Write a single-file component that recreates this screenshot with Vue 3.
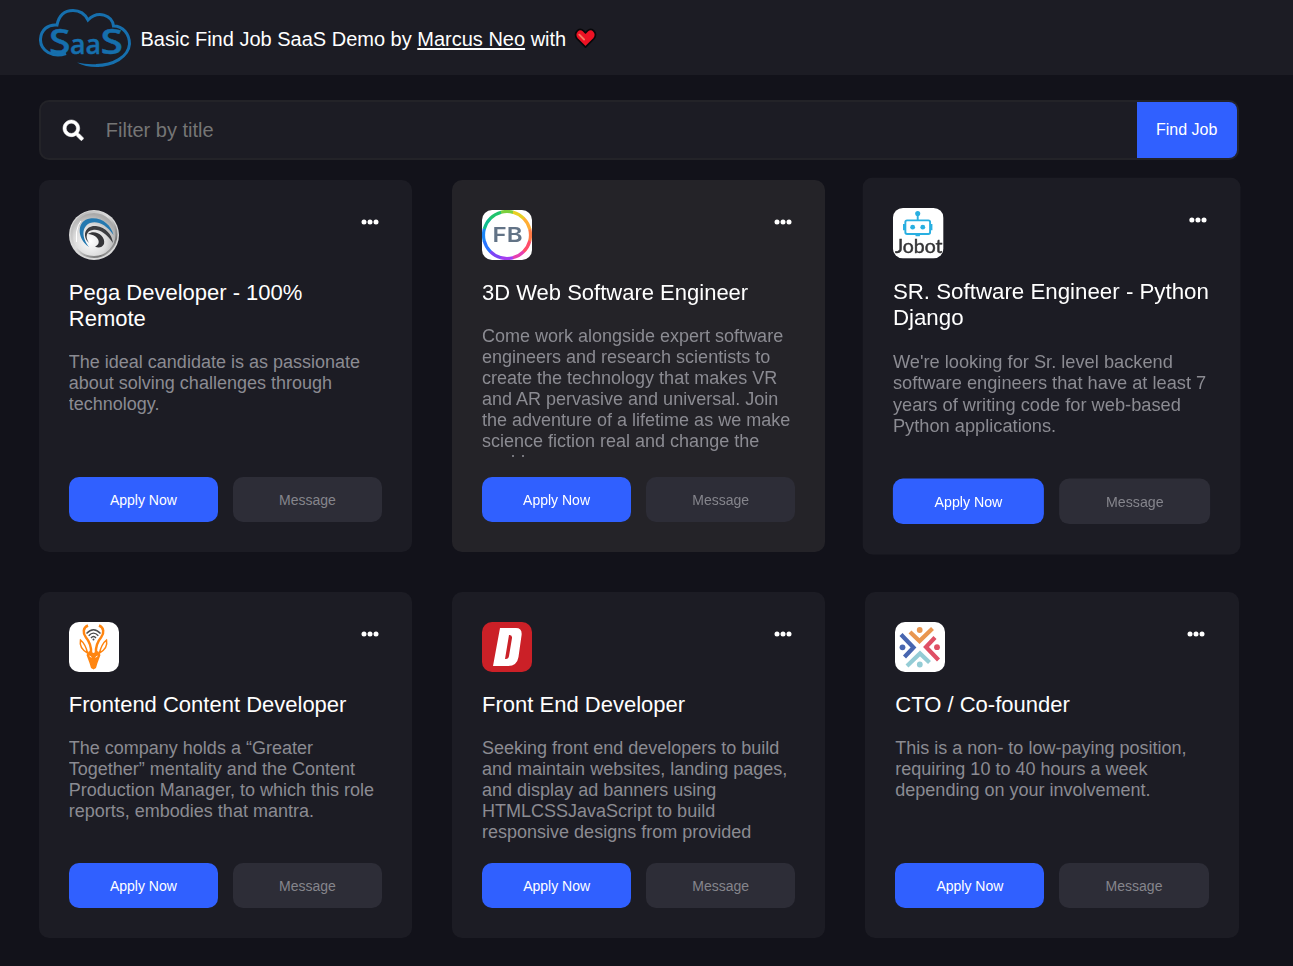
<script setup>
const jobs = [
  { logo: 'pega', title: 'Pega Developer - 100% Remote', text: 'The ideal candidate is as passionate about solving challenges through technology.' },
  { logo: 'fb', state: 'leaving', title: '3D Web Software Engineer', text: 'Come work alongside expert software engineers and research scientists to create the technology that makes VR and AR pervasive and universal. Join the adventure of a lifetime as we make science fiction real and change the world.' },
  { logo: 'jobot', state: 'raised', title: 'SR. Software Engineer - Python Django', text: "We're looking for Sr. level backend software engineers that have at least 7 years of writing code for web-based Python applications." },
  { logo: 'gazelle', title: 'Frontend Content Developer', text: 'The company holds a “Greater Together” mentality and the Content Production Manager, to which this role reports, embodies that mantra.' },
  { logo: 'dice', title: 'Front End Developer', text: 'Seeking front end developers to build and maintain websites, landing pages, and display ad banners using HTMLCSSJavaScript to build responsive designs from provided' },
  { logo: 'people', title: 'CTO / Co-founder', text: 'This is a non- to low-paying position, requiring 10 to 40 hours a week depending on your involvement.' },
]
const ring = ['#ff7a45', '#ff4d6a', '#e63fb0', '#a43df0', '#7d45f5', '#2874ff', '#1a84f5', '#10bd8d', '#20c46d', '#7bcf3c', '#e8cf22', '#ffae35']
const people = [
  { color: '#e9964f', turn: 0 },
  { color: '#df5065', turn: 90 },
  { color: '#94ccd5', turn: 180 },
  { color: '#4866b0', turn: 270 },
]
</script>

<template>
  <div class="page">
    <header class="header">
      <svg class="brand" viewBox="0 0 92 60" aria-label="SaaS">
        <path fill="none" stroke="#166fad" stroke-width="3" d="M27 45.500C14 50 1 43 1.500 31C2 22 9 16 18 17C20 7 26 2.500 34 2.500C41 2.500 46 6 49 12C59 2 73 7 74.500 18C84 18 90.500 26 90.500 36C89.500 49 74 57.500 57 57.500" />
        <path fill="#166fad" d="M38 54.500Q48 57 60 56V59Q47 59.500 38 54.500Z" />
        <g fill="#166fad" stroke="#166fad" stroke-width=".4" font-family="Open Sans, sans-serif" font-weight="600">
          <text x="10" y="45.800" font-size="34" textLength="21.500" lengthAdjust="spacingAndGlyphs">S</text>
          <text x="31" y="45.800" font-size="27" textLength="31" lengthAdjust="spacingAndGlyphs">aa</text>
          <text x="61.500" y="45.800" font-size="34" textLength="22.500" lengthAdjust="spacingAndGlyphs">S</text>
        </g>
      </svg>
      <p class="tagline">Basic Find Job SaaS Demo by <a>Marcus Neo</a> with</p>
      <svg class="heart" viewBox="0 0 24 22">
        <path d="M12 20L3 11C-1 5 5-1 10 3L12 5L14 3C19-1 25 5 21 11Z" fill="#ed1224" stroke="#08080b" stroke-width="1.800" stroke-linejoin="round" />
        <path d="M5.500 7L10.500 12" stroke="#f77961" stroke-width="2" stroke-linecap="round" />
      </svg>
    </header>

    <main>
      <form class="search" @submit.prevent>
        <svg class="glass" viewBox="0 0 512 512"><path fill="#fff" stroke="#fff" stroke-width="14" d="M505 442.700L405.300 343c-4.500-4.500-10.600-7-17-7H372c27.600-35.300 44-79.700 44-128C416 93.100 322.900 0 208 0S0 93.100 0 208s93.100 208 208 208c48.300 0 92.700-16.400 128-44v16.300c0 6.400 2.500 12.500 7 17l99.700 99.700c9.400 9.400 24.600 9.400 33.900 0l28.300-28.300c9.400-9.400 9.400-24.600.1-34zM208 336c-70.700 0-128-57.200-128-128 0-70.700 57.200-128 128-128 70.700 0 128 57.200 128 128 0 70.700-57.200 128-128 128z" /></svg>
        <input type="text" placeholder="Filter by title" />
        <button class="find">Find Job</button>
      </form>

      <section class="grid">
        <article v-for="job in jobs" :key="job.logo" class="card" :class="job.state">
          <div class="top">
            <svg v-if="job.logo === 'pega'" class="logo" viewBox="0 0 50 50">
              <defs>
                <linearGradient id="metal" x1="0" y1="0" x2="1" y2="1"><stop offset="0" stop-color="#aaa" /><stop offset=".45" stop-color="#ddd" /><stop offset=".8" stop-color="#777" /><stop offset="1" stop-color="#eee" /></linearGradient>
                <radialGradient id="dome" cx=".42" cy=".65" r=".6"><stop offset="0" stop-color="#fff" /><stop offset=".6" stop-color="#dcdcdc" /><stop offset="1" stop-color="#aaa" /></radialGradient>
              </defs>
              <circle cx="25" cy="25" r="25" fill="#d9d9d9" />
              <circle cx="25" cy="24.500" r="22.500" fill="url(#dome)" stroke="url(#metal)" stroke-width="2" />
              <path d="M20 37C7 28 8 10 21 8.500C33 7 42 15 44.500 25C37 14 28 10.500 21 13C12 17 13 28 20 37Z" fill="#2479b0" />
              <path d="M20 33C12 25 17 15 27 16C37 17 43 25 44 33C37 23 30 19 24 20C17 21 16 27 20 33Z" fill="#3c3d40" />
              <path d="M19 24C26 19 37 26 35 34C33 38 29 38 26 36.500C33 34 30 25 19 24Z" fill="#343437" />
              <path d="M7.500 32V22Q9 14 12 11" stroke="#fff" stroke-width="1" fill="none" />
            </svg>
            <svg v-else-if="job.logo === 'fb'" class="logo" viewBox="0 0 50 50">
              <rect width="50" height="50" fill="#fff" />
              <circle v-for="(c, i) in ring" :key="c" cx="25" cy="25" r="23.500" fill="none" :stroke="c" stroke-width="3.200" pathLength="12" stroke-dasharray="1.030 10.970" :stroke-dashoffset="0.5 - i" />
              <text x="10.500" y="32.300" fill="#627386" font-family="Inter, sans-serif" font-size="20.500" font-weight="600" textLength="30" lengthAdjust="spacingAndGlyphs">FB</text>
            </svg>
            <svg v-else-if="job.logo === 'jobot'" class="logo" viewBox="0 0 50 50">
              <rect width="50" height="50" fill="#fff" />
              <g fill="#29afe1"><circle cx="24.500" cy="5.500" r="2.500" /><circle cx="19.500" cy="19" r="2.400" /><circle cx="29.500" cy="19" r="2.400" /><path d="M22 26h5l-.5 2h-4zM10 16h2v6h-2zM37 16h2v6h-2z" /></g>
              <path d="M24.500 6v7M14 12.300h21q1.700 0 1.700 1.700v10q0 1.700-1.700 1.700H14q-1.700 0-1.700-1.700V14q0-1.700 1.700-1.700Z" fill="none" stroke="#29afe1" stroke-width="1.900" />
              <text x="2" y="44.500" fill="#343436" stroke="#343436" stroke-width=".45" font-family="Lato, sans-serif" font-size="18.500" textLength="47" lengthAdjust="spacingAndGlyphs">Jobot</text>
            </svg>
            <svg v-else-if="job.logo === 'gazelle'" class="logo" viewBox="0 0 50 50">
              <rect width="50" height="50" fill="#fff" />
              <path d="M18.500 31C13 28 10.500 23 11.500 18Q16.500 22 18.500 31ZM30.500 31C36 28 38.500 23 37.500 18Q32.500 22 30.500 31Z" fill="#fff" stroke="#ff8510" stroke-width="1.500" />
              <path d="M19 3.500C14 5.500 13.500 11 17 15.500C20 19 22.500 23 22 31M30 3.500C35 5.500 35.500 11 32 15.500C29 19 26.500 23 27 31" fill="none" stroke="#ff8510" stroke-width="2.500" />
              <path d="M20 29L24.500 31L29 29L31.500 33L28.500 41L27 46L24.500 47.500L22 46L20.500 41L17.500 33Z" fill="#ff8510" />
              <path d="M20.500 34l2 1.300M28.500 34l-2 1.300" stroke="#fff" />
              <g fill="none" stroke="#4d4d4d" stroke-width="1.400"><path d="M17.500 11.500Q24.500 4 31.500 11.500M19.700 13.800Q24.500 8.500 29.300 13.800M22 16Q24.500 13 27 16" /></g>
              <circle cx="24.500" cy="17.600" r="1" fill="#4d4d4d" />
            </svg>
            <svg v-else-if="job.logo === 'dice'" class="logo" viewBox="0 0 50 50">
              <rect width="50" height="50" fill="#cb2027" />
              <path fill="#fff" fill-rule="evenodd" d="M18 6H34Q40.300 6 39.600 13L36.500 35Q35 44 26 44H11ZM27 13L23 37Q26.500 37.500 27 34L30 16Q30.300 12.500 27 13Z" />
            </svg>
            <svg v-else class="logo" viewBox="0 0 50 50">
              <rect width="50" height="50" fill="#fff" />
              <g v-for="p in people" :key="p.turn" :transform="`rotate(${p.turn} 24.750 25.250)`">
                <path d="M15 10L24.500 19L37.500 6.500" fill="none" :stroke="p.color" stroke-width="4.200" />
                <circle cx="24.700" cy="8" r="2.900" :fill="p.color" />
              </g>
            </svg>
            <svg class="more" viewBox="0 0 18 6" fill="#fff"><circle cx="3" cy="3" r="2.500" /><circle cx="9" cy="3" r="2.500" /><circle cx="15" cy="3" r="2.500" /></svg>
          </div>
          <h2>{{ job.title }}</h2>
          <p class="text">{{ job.text }}</p>
          <div class="actions">
            <button class="apply">Apply Now</button>
            <button class="message">Message</button>
          </div>
        </article>
      </section>
    </main>
  </div>
</template>

<style>
body { background: #12121a; }
</style>

<style scoped>
.page { box-sizing: border-box; height: 966px; overflow: hidden; background: #12121a; color: #fff; font-family: "Liberation Sans", Arial, sans-serif; }
.header { box-sizing: border-box; height: 75px; padding-left: 38.800px; display: flex; align-items: center; background: #1c1c24; }
.brand { width: 92px; height: 60px; }
.tagline { margin: 3px 0 0 9.700px; font-size: 20px; line-height: 24px; white-space: pre; }
.tagline a { text-decoration: underline; text-underline-offset: 2px; text-decoration-thickness: 2px; }
.heart { width: 23px; height: 21px; margin: 2px 0 0 7.500px; }
main { width: 1199.800px; margin: 25px 0 0 38.800px; }
.search { box-sizing: border-box; height: 60px; display: flex; align-items: center; border: 2px solid #232328; border-radius: 10px; overflow: hidden; background: #1c1c24; }
.glass { width: 20.500px; height: 20.500px; margin: 0 22px 0 22.500px; flex: none; overflow: visible; }
input { flex: 1; min-width: 0; padding: 0; border: 0; outline: 0; background: transparent; color: #fff; font: 20px "Liberation Sans", Arial, sans-serif; }
input::placeholder { color: #757575; }
button { padding: 0; border: 0; font-family: inherit; }
.find { width: 100px; height: 56px; color: #fff; background: #3060ff; font-size: 16px; }
.grid { display: grid; grid-template-columns: repeat(3, 1fr); gap: 40px; margin-top: 20px; }
.card { box-sizing: border-box; display: flex; flex-direction: column; padding: 30px; border-radius: 10px; background: #1c1c24; }
.leaving { background: #242328; will-change: transform; }
.raised { transform: scale(1.0135); will-change: transform; }
.top { display: flex; justify-content: space-between; }
.logo { width: 50px; height: 50px; border-radius: 10px; }
.more { width: 18px; height: 6px; margin: 9px 3.500px 0 0; }
h2 { margin: 20px 0 0; font-size: 22px; line-height: 26px; font-weight: 400; }
.text { flex: 1 0 105px; height: 0; margin: 20px 0; overflow: hidden; color: #8b8b92; font-size: 18px; line-height: 21px; }
.actions { display: grid; grid-template-columns: 1fr 1fr; gap: 15px; }
.actions button { height: 45px; border-radius: 10px; font-size: 14px; }
.apply { background: #3060ff; color: #fff; }
.message { background: #2d2d37; color: #85858c; }
</style>
